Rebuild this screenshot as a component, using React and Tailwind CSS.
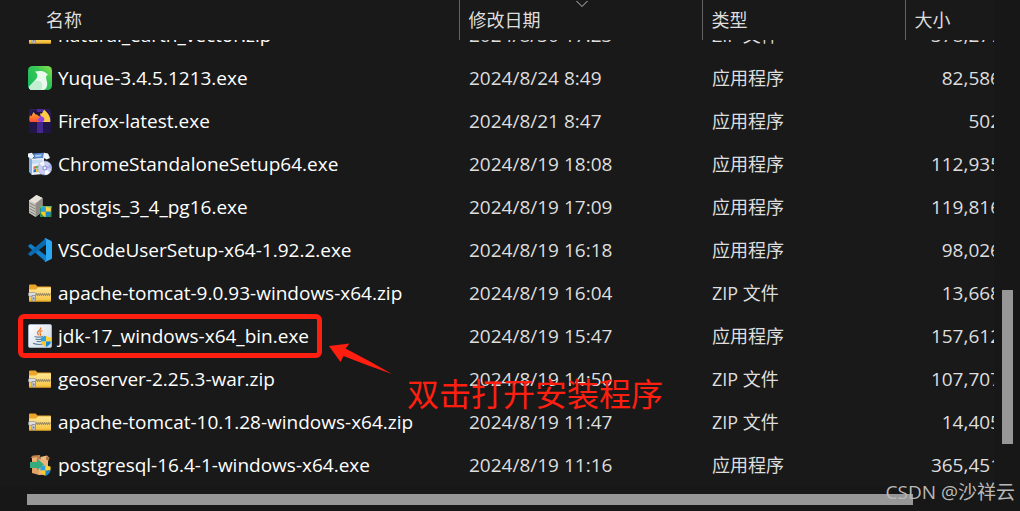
import React from 'react';

function Shield({ x, y, s }) {
  return (
    <svg x={x} y={y} width={s} height={s} viewBox="0 0 12 12">
      <path d="M6 0C4.400 1.200 2.400 1.400 .5 1.500V6H6Z" fill="#27a3e2" />
      <path d="M6 0C7.600 1.200 9.600 1.400 11.500 1.500V6H6Z" fill="#ffd23a" />
      <path d="M.5 6C.8 9 3.200 10.800 6 12V6Z" fill="#ffc928" />
      <path d="M11.500 6C11.200 9 8.800 10.800 6 12V6Z" fill="#1687cf" />
    </svg>
  );
}

function YuqueIcon() {
  return (
    <svg className="size-6 shrink-0" viewBox="0 0 24 24" aria-hidden="true">
      <defs>
        <linearGradient id="yq" x1="0" y1="1" x2="1" y2="0">
          <stop offset="0" stopColor="#13b85f" />
          <stop offset=".6" stopColor="#35c657" />
          <stop offset="1" stopColor="#8be04c" />
        </linearGradient>
      </defs>
      <rect width="24" height="24" rx="4.500" fill="url(#yq)" />
      <path d="M7 5.500C11 4.800 16 4.500 18.300 7.300L20 8.800L18.200 10C17.800 14 20 16 19 20C18.300 22.700 17 24 14.500 24H4C2 23.800 1.200 22.800 .8 21L8.500 12.500C10 10 9.500 7.500 7 5.500Z" fill="#e9f9ee" />
      <path d="M.8 21L5 16.500C9 13 14 15 14.300 19C14.500 22 13.500 23.300 12.500 24H4C2 24 1 22.800 .8 21Z" fill="#c2eed1" />
    </svg>
  );
}

function FirefoxIcon() {
  return (
    <svg className="size-6 shrink-0" viewBox="0 0 24 24" aria-hidden="true">
      <defs>
        <linearGradient id="fx" x1="0" y1="0" x2="0" y2="1">
          <stop offset="0" stopColor="#ffb62f" />
          <stop offset=".5" stopColor="#ff7a2c" />
          <stop offset="1" stopColor="#f8503c" />
        </linearGradient>
      </defs>
      <path d="M2 0H21.500L23 2.500V13H1V2.500Z" fill="#2c1a58" />
      <path d="M4 2H20L21 6V12H3V6Z" fill="#1f1440" />
      <rect x="9" y="0" width="6" height="3" fill="#4a2d96" />
      <path d="M9.500 13C9 9.500 10.500 7 13 6L18 8L17 13H11Z" fill="#8f43e0" />
      <path d="M12 4.500L14 4.500L16 .5C18.500 3 22.800 6 22.300 13H14.500C17 12 17 9.500 15 8C13.500 7.300 12 6.500 12 4.500Z" fill="#ffcb45" />
      <path d="M2 6.500L3.500 7L5.500 3L7.500 5.500C9.500 5.500 11 7 12 9C10.500 9 9.500 10 10 11C10.500 12 11.500 12.200 12 12.500V13H2C1 11 1.200 8.500 2 6.500Z" fill="url(#fx)" />
      <path d="M1 13H23V24H1Z" fill="#21154a" />
      <path d="M9 13H15V24H9Z" fill="#46288c" />
    </svg>
  );
}

function InstallerIcon() {
  return (
    <svg className="size-6 shrink-0" viewBox="0 0 24 24" aria-hidden="true">
      <path d="M1 4L3.500 6V22.500L1 20Z" fill="#86addf" />
      <path d="M3.500 6.500L16 5.500V22L3.500 23Z" fill="#eaf0fa" />
      <path d="M0 1.500L4 .8L6.500 4.500L3.500 7L0 5Z" fill="#eef4fc" />
      <path d="M4.500 1.500L16 .8L17.500 3L15 6L5.500 6.500L6.500 4.500Z" fill="#5787cc" />
      <path d="M7 3L14 2.500L13 4.500L7.500 5Z" fill="#a9c7ef" />
      <path d="M16 .8L20 1.500L22 6L18.500 7.500L15 5.500Z" fill="#f1f5fc" />
      <path d="M4 8L14 7.500V11L4 12Z" fill="#c6d9f3" />
      <path d="M5.500 14.500L8 14V16.500L5.500 17Z" fill="#e76942" />
      <path d="M5.500 17.500L8 17V20L5.500 20.500Z" fill="#3274ce" />
      <path d="M8 14L10.500 13.800V16.300L8 16.500Z" fill="#56ad46" />
      <path d="M8 17L10.500 16.800V20L8 20.300Z" fill="#efbf38" />
      <circle cx="16.800" cy="16" r="7" fill="#c9d0ef" stroke="#8e99c8" strokeWidth=".6" />
      <path d="M16.800 16L11.300 11.500A7 7 0 0 1 15.800 9.100Z" fill="#f5f7ff" />
      <path d="M16.800 16L22 20.500A7 7 0 0 1 17.400 22.900Z" fill="#ffffff" />
      <path d="M16.800 16L22.400 12.300A7 7 0 0 1 23.500 16.500Z" fill="#a9b3ee" />
      <circle cx="16.800" cy="16" r="2.500" fill="#9298d9" />
      <circle cx="16.800" cy="16" r="1.200" fill="#f8f9ff" />
    </svg>
  );
}

function ServerIcon() {
  return (
    <svg className="size-6 shrink-0" viewBox="0 0 24 24" aria-hidden="true">
      <path d="M1 5.500L8.500 0L14.500 3L14.500 16L7.500 22L1 18Z" fill="#c9c5bd" />
      <path d="M1 5.500L8.500 0L14.500 3L7.500 8.500Z" fill="#e6e2da" />
      <path d="M7.500 8.500L14.500 3V17L7.500 22Z" fill="#908b84" />
      <path d="M1.500 8L7 11M1.500 10.800L7 13.800M1.500 13.600L7 16.600M1.500 16.400L7 19.400" stroke="#85817b" strokeWidth="1" />
      <path d="M12 11H23.500V22H12Z" fill="#2f8f58" />
      <path d="M12 11H23.500V13H12Z" fill="#5cb87a" />
      <Shield x="12.300" y="11.200" s="11" />
    </svg>
  );
}

function VSCodeIcon() {
  return (
    <svg className="size-6 shrink-0" viewBox="0 0 24 24" aria-hidden="true">
      <path d="M.5 7.500L2 6.200Q2.600 5.900 3.200 6.300L18 17.500V24L.5 8.700Q0 8 .5 7.500Z" fill="#0f80c9" />
      <path d="M.5 16.500L2 17.800Q2.600 18.200 3.200 17.800L18 6.500V0L.5 15.300Q0 16 .5 16.500Z" fill="#0b6bb0" />
      <path d="M17.200 0L23 2.700Q24 3.200 24 4.300V19.700Q24 20.800 23 21.300L17.200 24L16.500 23.500L18 22V2L16.500 .5Z" fill="#2ba7f3" />
    </svg>
  );
}

function ZipIcon() {
  return (
    <svg className="size-6 shrink-0" viewBox="0 0 24 24" aria-hidden="true">
      <defs>
        <linearGradient id="zf" x1="0" y1="0" x2="0" y2="1">
          <stop offset="0" stopColor="#ffe796" />
          <stop offset="1" stopColor="#f5c13c" />
        </linearGradient>
      </defs>
      <path d="M1 4.500Q1 3.500 2 3.500H7.500L9.500 5.500H22Q23 5.500 23 6.500V10H1Z" fill="#eba62a" />
      <path d="M1 8.500H8L10 6.500H23V19.500Q23 20.500 22 20.500H2Q1 20.500 1 19.500Z" fill="url(#zf)" />
      <path d="M1 20H23" stroke="#e6a727" />
      <path d="M7.500 13.500H22.500" stroke="#d6bd7c" strokeWidth="2.400" />
      <path d="M8 13H22.500" stroke="#6e6550" strokeWidth="1" strokeDasharray="1 1" />
      <path d="M9 14H22.500" stroke="#6e6550" strokeWidth="1" strokeDasharray="1 1" />
      <rect x=".5" y="11.500" width="7" height="3.800" rx="1" fill="#dcdee0" stroke="#8b8b8b" strokeWidth=".6" />
      <path d="M4 14.500H7.500V20H4Z" fill="#d0d3d6" stroke="#808387" strokeWidth=".7" />
      <rect x="5.200" y="16.500" width="1.200" height="2" fill="#66696d" />
    </svg>
  );
}

function JavaIcon() {
  return (
    <svg className="size-6 shrink-0" viewBox="0 0 24 24" aria-hidden="true">
      <defs>
        <linearGradient id="jv" x1="0" y1="0" x2="1" y2="1">
          <stop offset="0" stopColor="#ffffff" />
          <stop offset="1" stopColor="#cbd4df" />
        </linearGradient>
      </defs>
      <rect x=".5" y=".5" width="23" height="23" rx="1.500" fill="url(#jv)" stroke="#a5b4c8" />
      <path d="M12.500 3.500C14 6.500 8.500 7 9.500 9.200Q10 10.500 11 11.300M14.500 6.500C12.500 7.200 11 8.600 12.500 10Q13 11 12 11.700" fill="none" stroke="#ec7927" strokeWidth="1.300" />
      <path d="M6.500 12.500Q10.500 13.800 15 12.500M7.500 15Q10.500 16 14.500 15M8.500 17.300Q11 18 13.500 17.300M5 19.300Q10.500 21.500 17 19.500M15.500 12.300Q18.500 12 15.500 15.500" fill="none" stroke="#5c7f9f" strokeWidth="1.100" />
      <Shield x="12.500" y="12" s="11" />
    </svg>
  );
}

function PackageIcon() {
  return (
    <svg className="size-6 shrink-0" viewBox="0 0 24 24" aria-hidden="true">
      <path d="M4 8L9 5L20 6V21L11 22L4 20Z" fill="#e0a265" />
      <path d="M2.500 4.500L5 2.500L12 2L12.500 4.500L8 6Z" fill="#c0844a" />
      <path d="M4 5L9 4L8 8H4Z" fill="#edb37a" />
      <path d="M12.500 4L19 2.500L21.500 5L20 8L13 6.500Z" fill="#efbd85" />
      <path d="M18.500 3L21.500 5L20 8L18 6.500Z" fill="#a96f38" />
      <path d="M10 7L20 7V21L11 22Z" fill="#edb37a" />
      <path d="M2 9H9V5.500L16 11.500L9 17.500V15H2Z" fill="#38ab7d" />
      <Shield x="12" y="12" s="11" />
    </svg>
  );
}

const APP = '应用程序';
const ZIP = 'ZIP 文件';

const files = [
  { icon: ZipIcon, name: 'natural_earth_vector.zip', date: '2024/8/30 17:23', type: ZIP, size: '378,277', clipped: true },
  { icon: YuqueIcon, name: 'Yuque-3.4.5.1213.exe', date: '2024/8/24 8:49', type: APP, size: '82,586' },
  { icon: FirefoxIcon, name: 'Firefox-latest.exe', date: '2024/8/21 8:47', type: APP, size: '502' },
  { icon: InstallerIcon, name: 'ChromeStandaloneSetup64.exe', date: '2024/8/19 18:08', type: APP, size: '112,935' },
  { icon: ServerIcon, name: 'postgis_3_4_pg16.exe', date: '2024/8/19 17:09', type: APP, size: '119,816' },
  { icon: VSCodeIcon, name: 'VSCodeUserSetup-x64-1.92.2.exe', date: '2024/8/19 16:18', type: APP, size: '98,026' },
  { icon: ZipIcon, name: 'apache-tomcat-9.0.93-windows-x64.zip', date: '2024/8/19 16:04', type: ZIP, size: '13,668' },
  { icon: JavaIcon, name: 'jdk-17_windows-x64_bin.exe', date: '2024/8/19 15:47', type: APP, size: '157,612', marked: true },
  { icon: ZipIcon, name: 'geoserver-2.25.3-war.zip', date: '2024/8/19 14:50', type: ZIP, size: '107,707' },
  { icon: ZipIcon, name: 'apache-tomcat-10.1.28-windows-x64.zip', date: '2024/8/19 11:47', type: ZIP, size: '14,405' },
  { icon: PackageIcon, name: 'postgresql-16.4-1-windows-x64.exe', date: '2024/8/19 11:16', type: APP, size: '365,451' },
];

function Cell({ clipped, className = '', children }) {
  return (
    <td className="p-0">
      <div className={clipped ? 'flex h-4 items-end overflow-hidden' : 'flex'}>
        <div className={`flex h-[43px] shrink-0 items-center whitespace-nowrap ${className}`}>{children}</div>
      </div>
    </td>
  );
}

function Callout() {
  return (
    <div className="pointer-events-none absolute top-0 left-[18px] z-10 h-[44px] w-[304px] rounded-md border-[5px] border-[#ff1f10]">
      <svg className="absolute top-[22px] left-[306px] h-9 w-16" viewBox="0 0 64 36" aria-hidden="true">
        <path d="M0 5L20.500 2.500L16.500 7.500Q39 19 63 33Q37 24 14.500 15L11.500 21Z" fill="#ff1f10" />
      </svg>
      <p className="absolute top-[55px] left-[384px] text-[32px] leading-10 whitespace-nowrap text-[#ff1f10]">双击打开安装程序</p>
    </div>
  );
}

export default function App() {
  return (
    <main className="relative flex min-h-screen flex-col overflow-hidden bg-[#191919] font-['Open_Sans','Noto_Sans_CJK_SC',sans-serif] text-[19px] leading-6 text-[#dedede]">
      <div className="flex">
        <div className="min-w-0 flex-1 overflow-hidden">
          <table className="w-full table-fixed border-collapse">
            <colgroup>
              <col />
              <col className="w-[243px]" />
              <col className="w-[203px]" />
              <col className="w-[89px]" />
            </colgroup>
            <thead>
              <tr className="h-10 text-left text-[18px]">
                <th className="p-0 pl-[46px] font-normal">名称</th>
                <th className="relative border-l border-[#636363] p-0 pl-[9px] font-normal">
                  修改日期
                  <svg className="absolute top-0 left-[116px] h-2 w-3" viewBox="0 0 12 8" fill="none" stroke="#c4c4c4" aria-hidden="true">
                    <path d="M.5 1L6 6.500L11.500 1" />
                  </svg>
                </th>
                <th className="border-l border-[#636363] p-0 pl-[9px] font-normal">类型</th>
                <th className="border-l border-[#636363] p-0 pl-[9px] font-normal">大小</th>
              </tr>
            </thead>
            <tbody>
              {files.map(({ icon: Icon, name, date, type, size, clipped, marked }) => (
                <tr key={name}>
                  <Cell clipped={clipped} className="relative gap-[6px] pl-7 text-white">
                    <Icon />
                    {name}
                    {marked && <Callout />}
                  </Cell>
                  <Cell clipped={clipped} className="pl-[10px]">{date}</Cell>
                  <Cell clipped={clipped} className="pl-[10px] text-[18px]">{type}</Cell>
                  <Cell clipped={clipped} className="w-24 justify-end">{size}</Cell>
                </tr>
              ))}
            </tbody>
          </table>
        </div>
        <div className="w-[26px] bg-[#171717] pt-[290px] pl-2">
          <div className="h-[154px] w-[11px] bg-[#979797]" />
        </div>
      </div>
      <div className="flex-1 bg-[#171717] pt-2 pr-[107px] pb-[6px] pl-[27px]">
        <div className="h-[11px] bg-[#979797]" />
      </div>
      <p className="absolute right-[5px] bottom-[7px] text-[19px] leading-6 text-[#b9b9b9]">CSDN @沙祥云</p>
    </main>
  );
}
